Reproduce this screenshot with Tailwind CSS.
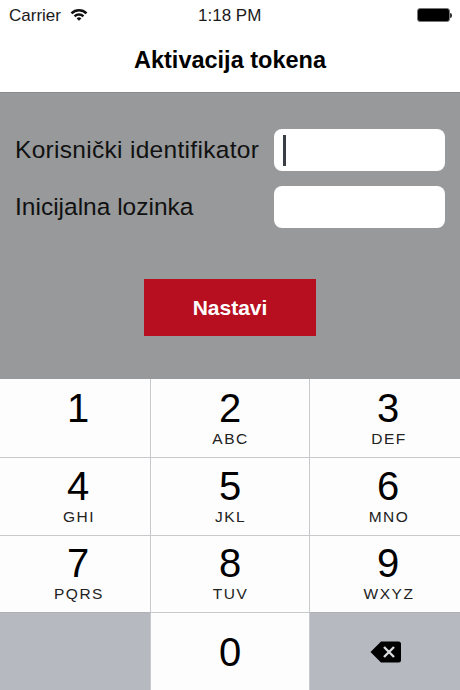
<!DOCTYPE html>
<html lang="hr">
<head>
    <meta charset="UTF-8">
    <meta name="viewport" content="width=device-width, initial-scale=1.0">
    <title>Aktivacija tokena</title>
    <script src="https://cdn.jsdelivr.net/npm/@tailwindcss/browser@4"></script>
</head>
<body class="bg-white font-['Liberation_Sans',Arial,sans-serif] text-black">
    <div class="w-[460px] h-[690px] flex flex-col overflow-hidden">
        <!-- status bar -->
        <div class="h-[30px] pl-[9px] pr-[8px] flex items-center justify-between text-[#1a1a1a] relative">
            <div class="flex items-center gap-[9px]">
                <span class="text-[17px] pt-[2px]">Carrier</span>
                <svg width="18" height="13" viewBox="0 0 18 13" class="mb-[2px]">
                    <path d="M0.6 4.4 A12 12 0 0 1 17.4 4.4 L15.6 6.3 A9.4 9.4 0 0 0 2.4 6.3 Z" fill="#111"/>
                    <path d="M3.7 7.5 A7.6 7.6 0 0 1 14.3 7.5 L12.5 9.3 A5 5 0 0 0 5.5 9.3 Z" fill="#111"/>
                    <path d="M6.6 10.4 A3.5 3.5 0 0 1 11.4 10.4 L9 12.8 Z" fill="#111"/>
                </svg>
            </div>
            <span class="absolute left-[198px] top-[6px] text-[17px] leading-[20px]">1:18 PM</span>
            <div class="flex items-center">
                <div class="w-[33px] h-[14px] rounded-[3px] border border-[#777] bg-black"></div>
                <div class="w-[2px] h-[5px] bg-[#333] rounded-r-sm"></div>
            </div>
        </div>

        <!-- nav bar -->
        <div class="h-[63px] flex items-center justify-center border-b border-[#8a8a8a]">
            <h1 class="text-[23.5px] font-bold">Aktivacija tokena</h1>
        </div>

        <!-- form -->
        <div class="h-[286px] bg-[#97999b] pl-[15px] pr-[15px] pt-[36px] flex flex-col">
            <div class="flex items-center justify-between h-[42px] mb-[15px]">
                <label class="text-[24.5px] tracking-[0.3px] text-[#111]">Korisnički identifikator</label>
                <div class="w-[171px] h-[42px] bg-white rounded-[8px] pl-[9px] flex items-center">
                    <div class="w-[3px] h-[31px] bg-[#3a3f45]"></div>
                </div>
            </div>
            <div class="flex items-center justify-between h-[42px]">
                <label class="text-[24.5px] text-[#111]">Inicijalna lozinka</label>
                <div class="w-[171px] h-[42px] bg-white rounded-[8px]"></div>
            </div>
            <button class="mt-[51px] w-[172px] h-[57px] ml-[129px] bg-[#b70f20] text-white text-[21px] font-bold">Nastavi</button>
        </div>

        <!-- keypad -->
        <div class="flex-1 grid grid-cols-[150px_1px_158px_1px_150px] grid-rows-[78px_78px_77px_78px] bg-[#c8c9cc]">
            <div class="bg-[#fdfdfd] flex flex-col items-center pt-[6px] pl-[6px]"><span class="text-[40px] leading-[46px]">1</span></div>
            <div></div>
            <div class="bg-[#fdfdfd] flex flex-col items-center pt-[6px]"><span class="text-[40px] leading-[46px]">2</span><span class="text-[15.5px] leading-[16px] tracking-[1.5px] ml-[1px] text-[#222]">ABC</span></div>
            <div></div>
            <div class="bg-[#fdfdfd] flex flex-col items-center pt-[6px] pl-[6px]"><span class="text-[40px] leading-[46px]">3</span><span class="text-[15.5px] leading-[16px] tracking-[1.5px] ml-[2px] text-[#222]">DEF</span></div>

            <div class="bg-[#fdfdfd] border-t border-[#c8c9cc] flex flex-col items-center pt-[5px] pl-[6px]"><span class="text-[40px] leading-[46px]">4</span><span class="text-[15.5px] leading-[16px] tracking-[1.5px] ml-[2px] text-[#222]">GHI</span></div>
            <div></div>
            <div class="bg-[#fdfdfd] border-t border-[#c8c9cc] flex flex-col items-center pt-[5px]"><span class="text-[40px] leading-[46px]">5</span><span class="text-[15.5px] leading-[16px] tracking-[1.5px] ml-[1px] text-[#222]">JKL</span></div>
            <div></div>
            <div class="bg-[#fdfdfd] border-t border-[#c8c9cc] flex flex-col items-center pt-[5px] pl-[6px]"><span class="text-[40px] leading-[46px]">6</span><span class="text-[15.5px] leading-[16px] tracking-[1.5px] ml-[2px] text-[#222]">MNO</span></div>

            <div class="bg-[#fdfdfd] border-t border-[#c8c9cc] flex flex-col items-center pt-[4px] pl-[6px]"><span class="text-[40px] leading-[46px]">7</span><span class="text-[15.5px] leading-[16px] tracking-[1.5px] ml-[2px] text-[#222]">PQRS</span></div>
            <div></div>
            <div class="bg-[#fdfdfd] border-t border-[#c8c9cc] flex flex-col items-center pt-[4px]"><span class="text-[40px] leading-[46px]">8</span><span class="text-[15.5px] leading-[16px] tracking-[1.5px] ml-[1px] text-[#222]">TUV</span></div>
            <div></div>
            <div class="bg-[#fdfdfd] border-t border-[#c8c9cc] flex flex-col items-center pt-[4px] pl-[6px]"><span class="text-[40px] leading-[46px]">9</span><span class="text-[15.5px] leading-[16px] tracking-[1.5px] ml-[2px] text-[#222]">WXYZ</span></div>

            <div class="bg-[#b6b9c0] border-t border-[#aeb0b5]"></div>
            <div></div>
            <div class="bg-[#fdfdfd] border-t border-[#c8c9cc] flex flex-col items-center pt-[16px]"><span class="text-[40px] leading-[46px]">0</span></div>
            <div></div>
            <div class="bg-[#b6b9c0] border-t border-[#aeb0b5] flex items-center justify-center pl-[2px]">
                <svg width="32" height="24" viewBox="0 0 32 24">
                    <path d="M11 1.5 H28.5 A2.5 2.5 0 0 1 31 4 V20 A2.5 2.5 0 0 1 28.5 22.5 H11 L0.5 12 Z" fill="#000"/>
                    <path d="M14 7 L24 17 M24 7 L14 17" stroke="#d9dade" stroke-width="2.4" fill="none"/>
                </svg>
            </div>
        </div>
    </div>
</body>
</html>
